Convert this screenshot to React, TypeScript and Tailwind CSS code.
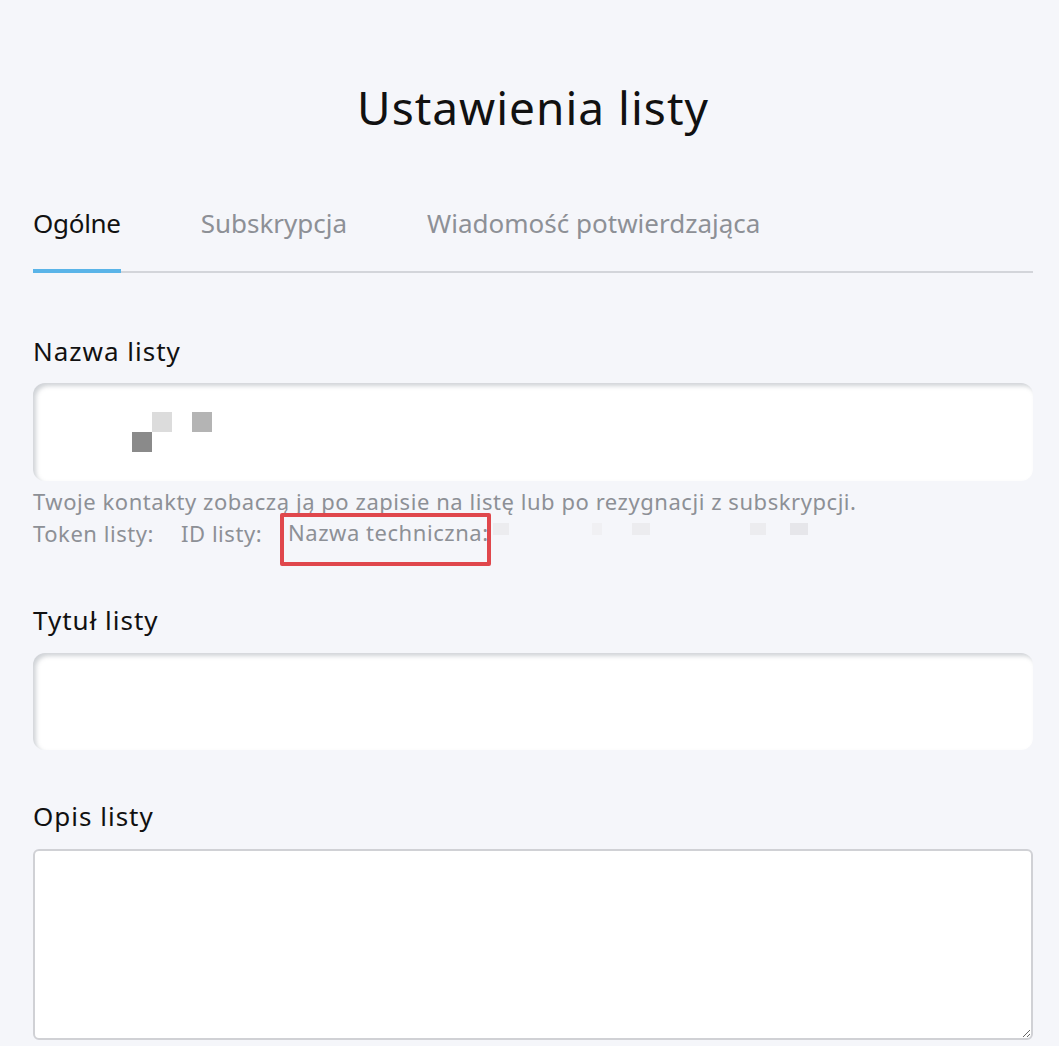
import React from 'react';

export default function App() {
  const tabs = ['Ogólne', 'Subskrypcja', 'Wiadomość potwierdzająca'];

  return (
    <div className="min-h-[1046px] bg-[#f5f6fa] text-[#111] font-['Noto_Sans',sans-serif]">
      <div className="ml-[33px] w-[1000px] pt-[76px]">
        <h1 className="text-center text-[46px] leading-[62px] tracking-[1px]">Ustawienia listy</h1>

        {/* Tabs */}
        <div className="mt-[67px] border-b-2 border-[#d3d5da]">
          <div className="flex gap-[80px]">
            {tabs.map((tab, i) => (
              <div
                key={tab}
                className={
                  i === 0
                    ? 'relative pb-[30px] text-[26px] leading-[36px] tracking-[-0.3px] text-[#111]'
                    : 'relative pb-[30px] text-[26px] leading-[36px] text-[#8d9096]'
                }
              >
                {tab}
                {i === 0 && <div className="absolute -bottom-[2px] left-0 right-0 h-[4px] bg-[#5ab4e8]" />}
              </div>
            ))}
          </div>
        </div>

        {/* Nazwa listy */}
        <div className="mt-[60px]">
          <label className="block text-[26px] leading-[36px] tracking-[1px]">Nazwa listy</label>
          <div className="relative mt-[14px] h-[98px] rounded-[12px] bg-white shadow-[inset_3px_3px_4px_rgba(120,128,140,0.35)]">
            <div className="absolute left-[99px] top-[49px] h-[20px] w-[20px] bg-[#8a8a8a]" />
            <div className="absolute left-[119px] top-[29px] h-[20px] w-[20px] bg-[#dcdcdc]" />
            <div className="absolute left-[159px] top-[29px] h-[20px] w-[20px] bg-[#b4b4b4]" />
          </div>
          <p className="mt-[4px] whitespace-nowrap text-[22px] leading-[32px] tracking-[0.55px] text-[#8d9096]">
            Twoje kontakty zobaczą ją po zapisie na listę lub po rezygnacji z subskrypcji.
          </p>
          <div className="flex items-start whitespace-nowrap text-[22px] leading-[32px] tracking-[0.55px] text-[#8d9096]">
            <span className="w-[148px]">Token listy:</span>
            <span className="w-[99px]">ID listy:</span>
            <div className="relative -mt-[4px] flex h-[53px] w-[211px] items-start rounded-[2px] border-[4px] border-[#e0474c] pl-[4px]">
              <span className="mt-[-1px]">Nazwa techniczna:</span>
            </div>
            <div className="mt-[6px] flex items-start">
              <div className="ml-[2px] h-[12px] w-[16px] bg-[#ececef]" />
              <div className="ml-[83px] h-[12px] w-[10px] bg-[#f0f0f3]" />
              <div className="ml-[30px] h-[12px] w-[18px] bg-[#ececef]" />
              <div className="ml-[100px] h-[12px] w-[16px] bg-[#ececef]" />
              <div className="ml-[24px] h-[12px] w-[18px] bg-[#e6e6ea]" />
            </div>
          </div>
        </div>

        {/* Tytuł listy */}
        <div className="mt-[36px]">
          <label className="block text-[26px] leading-[36px] tracking-[1px]">Tytuł listy</label>
          <div className="mt-[15px] h-[97px] rounded-[12px] bg-white shadow-[inset_3px_3px_4px_rgba(120,128,140,0.35)]" />
        </div>

        {/* Opis listy */}
        <div className="mt-[48px]">
          <label className="block text-[26px] leading-[36px] tracking-[1px]">Opis listy</label>
          <textarea className="mt-[15px] block h-[191px] w-full resize-y rounded-[6px] border-2 border-[#d0d1d5] bg-white outline-none" />
        </div>
      </div>
    </div>
  );
}
